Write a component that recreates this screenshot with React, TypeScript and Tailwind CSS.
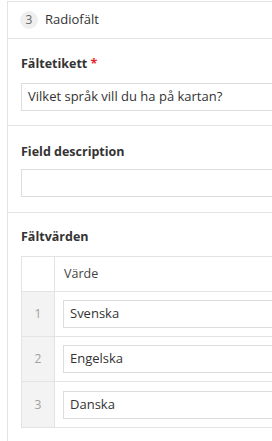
import React from "react";

const font = { fontFamily: '"Open Sans", "Segoe UI", sans-serif' };

function Row({ n, value, last }: { n: number; value: string; last?: boolean }) {
  return (
    <div className={`flex h-[45px] ${last ? "" : "border-b border-[#e3e3e3]"}`}>
      <div className="w-[33px] shrink-0 bg-[#f3f3f3] border-r border-[#e3e3e3] flex items-center justify-center text-[12px] text-[#a0a0a0]">
        {n}
      </div>
      <div className="flex-1 flex items-center pl-[8px]">
        <div className="w-full h-[28px] border border-[#dcdcdc] flex items-center pl-[6px] text-[13px] text-[#333]">
          {value}
        </div>
      </div>
    </div>
  );
}

export default function App() {
  return (
    <div className="w-[272px] h-[441px] overflow-hidden bg-white" style={font}>
      <div className="w-[320px] ml-[7px] mt-[1px] border-l border-t border-[#e3e3e3]">
        <div className="h-[37px] border-b border-[#e3e3e3] flex items-center pl-[12px]">
          <div className="w-[18px] h-[18px] rounded-full bg-[#efefef] flex items-center justify-center text-[12px] text-[#666]">
            3
          </div>
          <span className="ml-[7px] text-[13px] text-[#333]">Radiofält</span>
        </div>

        <div className="h-[87px] border-b border-[#e3e3e3] pl-[13px] pt-[16px]">
          <div className="text-[12.5px] font-bold text-[#333] leading-[18px]">
            Fältetikett <span className="text-[#e8262b]">*</span>
          </div>
          <div className="mt-[10px] h-[28px] border border-[#dcdcdc] flex items-center pl-[6px] text-[13px] text-[#333]">
            Vilket språk vill du ha på kartan?
          </div>
        </div>

        <div className="h-[87px] border-b border-[#e3e3e3] pl-[13px] pt-[17px]">
          <div className="text-[12.5px] font-bold text-[#333] leading-[18px]">Field description</div>
          <div className="mt-[8px] h-[28px] border border-[#dcdcdc]"></div>
        </div>

        <div className="pl-[13px] pt-[15px] pb-[20px]">
          <div className="text-[12.5px] font-bold text-[#333] leading-[18px]">Fältvärden</div>
          <div className="mt-[10px] border border-[#e3e3e3]">
            <div className="flex h-[35px] border-b border-[#e3e3e3]">
              <div className="w-[33px] shrink-0 border-r border-[#e3e3e3]"></div>
              <div className="flex-1 flex items-center pl-[9px] text-[12.5px] text-[#444]">Värde</div>
            </div>
            <Row n={1} value="Svenska" />
            <Row n={2} value="Engelska" />
            <Row n={3} value="Danska" last />
          </div>
        </div>
      </div>
    </div>
  );
}
